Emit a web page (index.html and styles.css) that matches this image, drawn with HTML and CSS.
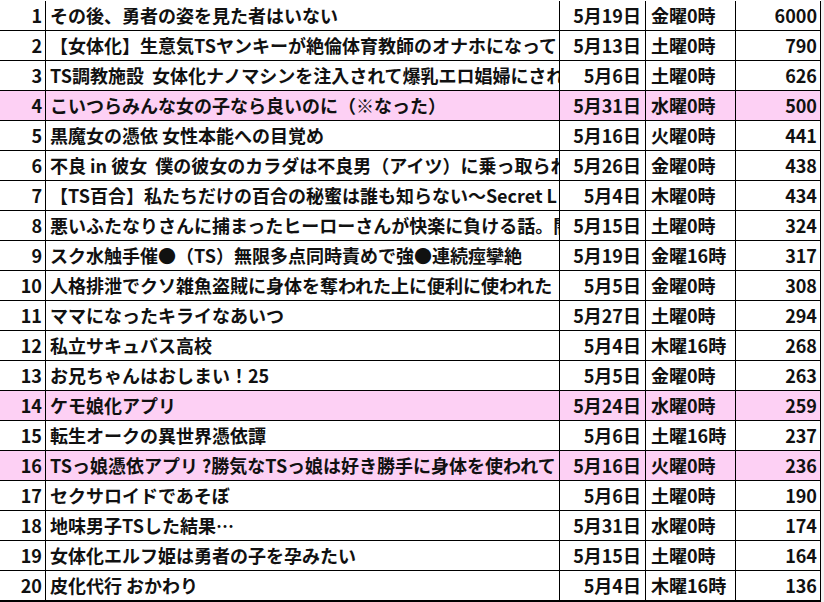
FILE: index.html
```html
<!DOCTYPE html>
<html lang="ja">
<head>
<meta charset="utf-8">
<link rel="stylesheet" href="styles.css">
</head>
<body>
<div class="sheet">
  <div class="row"><div class="c no">1</div><div class="c title">その後、勇者の姿を見た者はいない</div><div class="c date">5月19日</div><div class="c time">金曜0時</div><div class="c num">6000</div></div>
  <div class="row"><div class="c no">2</div><div class="c title">【女体化】生意気TSヤンキーが絶倫体育教師のオナホになって</div><div class="c date">5月13日</div><div class="c time">土曜0時</div><div class="c num">790</div></div>
  <div class="row"><div class="c no">3</div><div class="c title">TS調教施設&nbsp; 女体化ナノマシンを注入されて爆乳エロ娼婦にされ</div><div class="c date">5月6日</div><div class="c time">土曜0時</div><div class="c num">626</div></div>
  <div class="row pink"><div class="c no">4</div><div class="c title">こいつらみんな女の子なら良いのに（※なった）</div><div class="c date">5月31日</div><div class="c time">水曜0時</div><div class="c num">500</div></div>
  <div class="row"><div class="c no">5</div><div class="c title">黒魔女の憑依 女性本能への目覚め</div><div class="c date">5月16日</div><div class="c time">火曜0時</div><div class="c num">441</div></div>
  <div class="row"><div class="c no">6</div><div class="c title">不良 in 彼女&nbsp; 僕の彼女のカラダは不良男（アイツ）に乗っ取られ</div><div class="c date">5月26日</div><div class="c time">金曜0時</div><div class="c num">438</div></div>
  <div class="row"><div class="c no">7</div><div class="c title">【TS百合】私たちだけの百合の秘蜜は誰も知らない～Secret L</div><div class="c date">5月4日</div><div class="c time">木曜0時</div><div class="c num">434</div></div>
  <div class="row"><div class="c no">8</div><div class="c title">悪いふたなりさんに捕まったヒーローさんが快楽に負ける話。闇</div><div class="c date">5月15日</div><div class="c time">土曜0時</div><div class="c num">324</div></div>
  <div class="row"><div class="c no">9</div><div class="c title">スク水触手催●（TS）無限多点同時責めで強●連続痙攣絶</div><div class="c date">5月19日</div><div class="c time">金曜16時</div><div class="c num">317</div></div>
  <div class="row"><div class="c no">10</div><div class="c title">人格排泄でクソ雑魚盗賊に身体を奪われた上に便利に使われた</div><div class="c date">5月5日</div><div class="c time">金曜0時</div><div class="c num">308</div></div>
  <div class="row"><div class="c no">11</div><div class="c title">ママになったキライなあいつ</div><div class="c date">5月27日</div><div class="c time">土曜0時</div><div class="c num">294</div></div>
  <div class="row"><div class="c no">12</div><div class="c title">私立サキュバス高校</div><div class="c date">5月4日</div><div class="c time">木曜16時</div><div class="c num">268</div></div>
  <div class="row"><div class="c no">13</div><div class="c title">お兄ちゃんはおしまい！25</div><div class="c date">5月5日</div><div class="c time">金曜0時</div><div class="c num">263</div></div>
  <div class="row pink"><div class="c no">14</div><div class="c title">ケモ娘化アプリ</div><div class="c date">5月24日</div><div class="c time">水曜0時</div><div class="c num">259</div></div>
  <div class="row"><div class="c no">15</div><div class="c title">転生オークの異世界憑依譚</div><div class="c date">5月6日</div><div class="c time">土曜16時</div><div class="c num">237</div></div>
  <div class="row pink"><div class="c no">16</div><div class="c title">TSっ娘憑依アプリ ?勝気なTSっ娘は好き勝手に身体を使われて</div><div class="c date">5月16日</div><div class="c time">火曜0時</div><div class="c num">236</div></div>
  <div class="row"><div class="c no">17</div><div class="c title">セクサロイドであそぼ</div><div class="c date">5月6日</div><div class="c time">土曜0時</div><div class="c num">190</div></div>
  <div class="row"><div class="c no">18</div><div class="c title">地味男子TSした結果…</div><div class="c date">5月31日</div><div class="c time">水曜0時</div><div class="c num">174</div></div>
  <div class="row"><div class="c no">19</div><div class="c title">女体化エルフ姫は勇者の子を孕みたい</div><div class="c date">5月15日</div><div class="c time">土曜0時</div><div class="c num">164</div></div>
  <div class="row last"><div class="c no">20</div><div class="c title">皮化代行 おかわり</div><div class="c date">5月4日</div><div class="c time">木曜16時</div><div class="c num">136</div></div>
</div>
</body>
</html>
```

FILE: styles.css
```css
html, body {
  margin: 0;
  padding: 0;
  background: #f2f2f2;
}
body {
  width: 824px;
  height: 602px;
  overflow: hidden;
  font-family: "Noto Sans CJK JP", "Noto Sans", sans-serif;
  font-weight: bold;
  font-size: 18px;
  color: #111;
}
.sheet {
  width: 821px;
  padding-top: 1px;
  background: #fff;
}
.row {
  display: grid;
  grid-template-columns: 46px 514px 86px 90px 85px;
  height: 30px;
  box-sizing: border-box;
  border-bottom: 1px solid #000;
  background: #fff;
}
.row.pink {
  background: #fdd0f4;
}
.row.last {
  height: 31px;
  border-bottom: 2px solid #000;
}
.c {
  box-sizing: border-box;
  border-right: 1px solid #000;
  line-height: 29px;
  white-space: nowrap;
  overflow: hidden;
}
.no {
  text-align: right;
  padding-right: 3px;
}
.title {
  padding-left: 4px;
}
.date {
  text-align: right;
  padding-right: 4px;
}
.time {
  padding-left: 5px;
}
.num {
  text-align: right;
  padding-right: 3px;
}
```
